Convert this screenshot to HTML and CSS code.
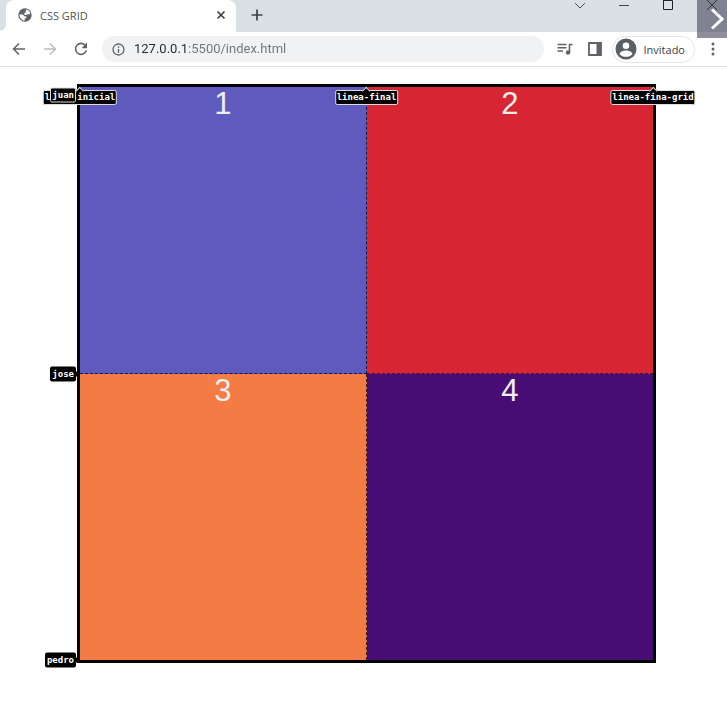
FILE: index.html
```html
<!DOCTYPE html>
<html lang="es">
<head>
<meta charset="utf-8">
<meta name="viewport" content="width=device-width, initial-scale=1">
<title>CSS GRID</title>
<link rel="stylesheet" href="styles.css">
</head>
<body>
<header class="browser">
  <div class="tabstrip">
    <div class="tab-edge"></div>
    <div class="tab">
      <svg class="globe" width="14" height="14" viewBox="0 0 14 14" aria-hidden="true"><circle cx="7" cy="7" r="6.7" fill="#5f6368"/><path d="M7.400 1.500c2.500 0 4.400 1.600 5 3.700l-1.500 1.300-2.100-.3-.6 1.100-1.700-.5-.4-1.500 1.600-.6-.2-1.400 1-.6zM1.500 6.400l3.400.2 1.500 1.700 2 .2-.2 1.500-1.400.7-.2 1.800C3.800 12.200 1.300 9.700 1.500 6.400z" fill="#fff"/></svg>
      <span class="tab-title">CSS GRID</span>
      <button class="icon-button" aria-label="Cerrar pestaña"><svg width="10" height="10" viewBox="0 0 10 10"><path d="M1.500 1.500l7 7M8.500 1.500l-7 7" stroke="#3c4043" stroke-width="1.700"/></svg></button>
    </div>
    <button class="icon-button new-tab" aria-label="Nueva pestaña"><svg width="12" height="12" viewBox="0 0 12 12"><path d="M6 0.500v11M0.500 6h11" stroke="#3c4043" stroke-width="1.700"/></svg></button>
    <div class="window-controls">
      <button class="icon-button" aria-label="Buscar pestañas"><svg width="12" height="10" viewBox="0 0 12 10"><path d="M1 3l5 5 5-5" fill="none" stroke="#4b4e50" stroke-width="1"/></svg></button>
      <button class="icon-button" aria-label="Minimizar"><svg width="12" height="10" viewBox="0 0 12 10"><path d="M1 5.500h10" stroke="#444" stroke-width="1"/></svg></button>
      <button class="icon-button" aria-label="Maximizar"><svg width="12" height="10" viewBox="0 0 12 10"><path d="M1.500 0v9.500h9V0.500h-9" fill="none" stroke="#222" stroke-width="1"/></svg></button>
      <button class="icon-button" aria-label="Cerrar ventana"><svg width="12" height="10" viewBox="0 0 12 10"><path d="M1 0l10 10M11 0L1 10" stroke="#222" stroke-width="1"/></svg></button>
    </div>
  </div>
  <div class="toolbar">
    <div class="navigation">
      <button class="icon-button" aria-label="Atrás"><svg width="14" height="14" viewBox="0 0 14 14"><path d="M13 7H2M7 1.500L1.500 7 7 12.500" fill="none" stroke="#5f6368" stroke-width="1.500"/></svg></button>
      <button class="icon-button" aria-label="Adelante"><svg width="14" height="14" viewBox="0 0 14 14"><path d="M1 7h11M7 1.500L12.500 7 7 12.500" fill="none" stroke="#babcbe" stroke-width="1.500"/></svg></button>
      <button class="icon-button" aria-label="Recargar"><svg width="14" height="14" viewBox="0 0 14 14"><path d="M11.500 3.600A5.500 5.500 0 1 0 12.300 8.500" fill="none" stroke="#5f6368" stroke-width="1.600"/><path d="M13 0.500V6.200H7.500z" fill="#5f6368"/></svg></button>
    </div>
    <label class="address">
      <svg width="13" height="13" viewBox="0 0 13 13" aria-hidden="true"><circle cx="6.500" cy="6.500" r="5.500" fill="none" stroke="#5f6368" stroke-width="1.300"/><path d="M6.500 6v3.700M6.500 3.300v1.400" stroke="#5f6368" stroke-width="1.400"/></svg>
      <input type="text" aria-label="Dirección" value="127.0.0.1:5500/index.html">
    </label>
    <button class="icon-button" aria-label="Medios"><svg width="16" height="14" viewBox="0 0 16 14"><path d="M0.500 2.500h9M0.500 5.700h9M0.500 9h5.500M15.500 2.500h-3v8" fill="none" stroke="#5f6368" stroke-width="1.600"/><circle cx="11" cy="10.500" r="2.200" fill="#5f6368"/></svg></button>
    <button class="icon-button panel" aria-label="Panel lateral"><svg width="14" height="14" viewBox="0 0 14 14"><path d="M1 1h12v12H1z" fill="none" stroke="#5f6368" stroke-width="1.800"/><path d="M8.500 1H13v12H8.500z" fill="#5f6368"/></svg></button>
    <button class="profile"><svg width="22" height="22" viewBox="0 0 22 22" aria-hidden="true"><circle cx="11" cy="11" r="10.500" fill="#5a5f63"/><circle cx="11" cy="7.700" r="3.300" fill="#fff"/><path d="M4.500 16c.6-2.500 4-3.500 6.500-3.500s5.900 1 6.500 3.500c-3.200 3.800-9.800 3.800-13 0z" fill="#fff"/></svg><span>Invitado</span></button>
    <button class="icon-button menu" aria-label="Menú"><svg width="4" height="14" viewBox="0 0 4 14" fill="#5f6368"><circle cx="2" cy="2" r="1.500"/><circle cx="2" cy="7" r="1.500"/><circle cx="2" cy="12" r="1.500"/></svg></button>
  </div>
  <button class="next" aria-label="Siguiente"><svg width="14" height="22" viewBox="0 0 14 22"><path d="M2 1.500L12 11 2 20.500" fill="none" stroke="#fff" stroke-width="3"/></svg></button>
</header>
<main class="page">
  <div class="grid">
    <div class="cell cell-blue">1</div>
    <div class="cell cell-red">2</div>
    <div class="cell cell-orange">3</div>
    <div class="cell cell-purple">4</div>
    <span class="line-name column column-start">linea-inicial</span>
    <span class="line-name column column-middle">linea-final</span>
    <span class="line-name column column-end">linea-fina-grid</span>
    <span class="line-name row row-start">juan</span>
    <span class="line-name row row-middle">jose</span>
    <span class="line-name row row-end">pedro</span>
  </div>
</main>
</body>
</html>
```
FILE: styles.css
```css
* {
  box-sizing: border-box;
}

body {
  margin: 0;
  background: #fff;
  font-family: "Open Sans", "Noto Sans", sans-serif;
  color: #3c4043;
  overflow-x: hidden;
}

svg {
  display: block;
  flex: none;
}

button {
  border: 0;
  padding: 0;
  background: none;
  font: inherit;
  color: inherit;
}

.icon-button {
  display: flex;
  flex: none;
}

/* Browser frame */
.browser {
  position: relative;
  border-bottom: 1px solid #dedfe1;
}

.tabstrip {
  display: flex;
  height: 32px;
  background: #dae1e5;
}

.tab-edge {
  width: 6px;
  background: radial-gradient(circle at 0 0, #dae1e5 6px, #fff 7px) 0 bottom / 6px 8px no-repeat;
}

.tab {
  display: flex;
  align-items: center;
  gap: 8px;
  width: 230px;
  padding: 0 10px 2px 12px;
  border-radius: 8px 8px 0 0;
  background: #fff;
  font-size: 12px;
}

.tab-title {
  flex: 1;
  color: #505458;
  font-size: 11px;
}

.new-tab {
  align-items: center;
  padding: 0 0 2px 15px;
}

.window-controls {
  display: flex;
  gap: 32px;
  margin-left: auto;
  padding-right: 9px;
}

.toolbar {
  display: flex;
  align-items: center;
  height: 34px;
  padding: 0 12px;
}

.navigation {
  display: flex;
  gap: 17px;
}

.address {
  display: flex;
  flex: 1;
  align-items: center;
  gap: 9px;
  height: 26px;
  margin: 0 13px 0 14px;
  padding: 0 10px;
  border-radius: 13px;
  background: #f0f2f3;
}

.address input {
  flex: 1;
  min-width: 0;
  padding: 0;
  border: 0;
  outline: 0;
  background: linear-gradient(90deg, #25282b 52px, #70757a 52px);
  background-clip: text;
  color: transparent;
  font: 13px/20px Roboto, "Open Sans", sans-serif;
}

.panel {
  margin-left: 15px;
}

.profile {
  display: flex;
  align-items: center;
  gap: 7px;
  height: 27px;
  margin-left: 10px;
  padding: 0 9px 0 2px;
  border: 1px solid #e3e5e7;
  border-radius: 14px;
  font-size: 11px;
}

.menu {
  margin-left: 16px;
}

.next {
  position: absolute;
  top: 0;
  right: 0;
  display: flex;
  align-items: center;
  justify-content: flex-end;
  width: 30px;
  height: 38px;
  padding-right: 3px;
  background: rgb(62 62 82 / 58%);
}

/* Page content */
.page {
  padding: 17px 71px 57px 77px;
}

.grid {
  position: relative;
  display: grid;
  grid-template: 1fr 1fr / 1fr 1fr;
  aspect-ratio: 1;
  border: 3px solid #000;
}

.cell {
  color: #eee;
  font: 31px/33px "Liberation Sans", Arial, sans-serif;
  text-align: center;
}

.cell-blue {
  border-right: 1px dashed #18183c;
  border-bottom: 1px dashed #18183c;
  background: #5e5abe;
}

.cell-red {
  border-bottom: 1px dashed #4b1033;
  background: #d72534;
}

.cell-orange {
  border-right: 1px dashed #3d1d1d;
  background: #f27c43;
}

.cell-purple {
  background: #470d75;
}

/* Grid line names */
.line-name {
  position: absolute;
  z-index: 1;
  padding: 0 2px;
  border-radius: 2px;
  background: #000;
  color: #fff;
  font: bold 9px/15px "DejaVu Sans Mono", monospace;
  white-space: nowrap;
}

.line-name::before {
  content: "";
  position: absolute;
  z-index: -1;
  width: 5px;
  height: 5px;
  background: #000;
  rotate: 45deg;
}

.column {
  top: 3px;
  padding: 0 1px;
  border: 1px solid #ddd;
  line-height: 13px;
  translate: -50%;
}

.column::before {
  top: -3px;
  left: calc(50% - 3px);
  border: solid #ddd;
  border-width: 1px 0 0 1px;
}

.row {
  right: calc(100% + 4px);
  translate: 0 -50%;
}

.row::before {
  top: 5px;
  right: -2px;
}

.column-start {
  left: 0;
}

.column-middle {
  left: 50%;
}

.column-end {
  left: 100%;
}

.row-start {
  top: 8px;
  padding: 0 1px;
  border: 1px solid #ddd;
  line-height: 13px;
}

.row-start::before {
  display: none;
}

.row-middle {
  top: 50%;
}

.row-end {
  top: 100%;
}
```
